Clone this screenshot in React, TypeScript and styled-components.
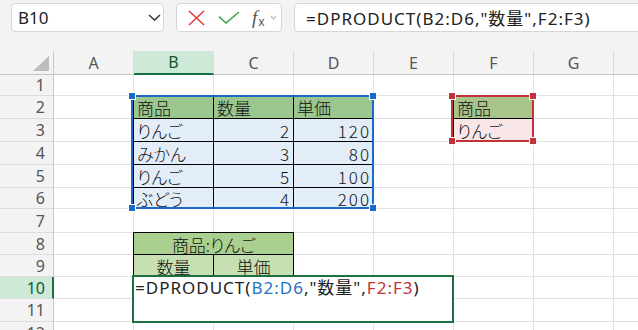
import React from 'react'
import styled, { createGlobalStyle } from 'styled-components'

const GlobalStyle = createGlobalStyle`
  html, body {
    margin: 0;
    padding: 0;
    background: #f3f3f3;
  }
  * {
    box-sizing: border-box;
  }
  body {
    font-family: 'Noto Sans', 'Noto Sans CJK JP', sans-serif;
  }
`

const COLS = ['A', 'B', 'C', 'D', 'E', 'F', 'G', 'H']
const ROW_HEIGHTS = [21, 23, 23, 23, 23, 21, 24, 22, 22, 22, 23, 22]

const SELECT_GREEN = '#1d6f42'
const BLUE = '#1b6ac9'
const RED = '#c3313a'

const Window = styled.div`
  width: 638px;
  height: 330px;
  overflow: hidden;
  display: flex;
  flex-direction: column;
  background: #f3f3f3;
`

const Toolbar = styled.div`
  height: 51px;
  flex: none;
  display: flex;
  align-items: flex-start;
  gap: 12px;
  padding: 3px 0 0 11px;
`

const Field = styled.div<{ $w?: number }>`
  height: 29px;
  background: #fff;
  border: 1px solid #d6d6d6;
  border-radius: 4px;
  display: flex;
  align-items: center;
  ${(p) => (p.$w ? `width: ${p.$w}px; flex: none;` : 'flex: 1; margin-right: -20px;')}
`

const NameBox = styled(Field)`
  justify-content: space-between;
  padding: 0 2px 0 6px;
  font-size: 17px;
  color: #222;
`

const FxBox = styled(Field)`
  padding-left: 11px;
`

const IconSlot = styled.span<{ $gap?: number }>`
  display: flex;
  align-items: center;
  margin-left: ${(p) => p.$gap ?? 0}px;
`

const FxLabel = styled.span`
  display: flex;
  align-items: flex-end;
  color: #555;
  line-height: 1;
  margin-left: 12px;
`

const FxF = styled.span`
  font-family: 'Liberation Serif', serif;
  font-style: italic;
  font-size: 19px;
`

const FxX = styled.span`
  font-family: 'Noto Sans', sans-serif;
  font-size: 12px;
  margin-left: 1px;
  margin-bottom: -1px;
`

const FormulaBar = styled(Field)`
  padding-left: 11px;
  white-space: nowrap;
`

const FormulaText = styled.span`
  font-family: 'Noto Sans', 'Noto Sans CJK JP', sans-serif;
  font-size: 17px;
  letter-spacing: 1px;
  color: #222;
`

const Ref = styled.span<{ $color: string }>`
  color: ${(p) => p.$color};
`

const Sheet = styled.div`
  display: grid;
  grid-template-columns: 54px repeat(8, 80px);
  grid-template-rows: 24px ${ROW_HEIGHTS.map((h) => `${h}px`).join(' ')};
  width: max-content;
  flex: none;
`

type Pos = { $row: number; $col: number }

const Corner = styled.div`
  grid-row: 1;
  grid-column: 1;
  background: #f3f3f3;
  border-right: 1px solid #c8c8c8;
  border-bottom: 1px solid #c4c4c4;
  display: flex;
  align-items: flex-end;
  justify-content: flex-end;
  padding: 0 4px 3px 0;
`

const ColHeader = styled.div<Pos & { $active?: boolean }>`
  grid-row: ${(p) => p.$row};
  grid-column: ${(p) => p.$col};
  background: ${(p) => (p.$active ? '#cde9d8' : '#f3f3f3')};
  border-right: 1px solid #dcdcdc;
  border-bottom: ${(p) => (p.$active ? `2px solid ${SELECT_GREEN}` : '1px solid #c4c4c4')};
  display: flex;
  align-items: center;
  justify-content: center;
  font-size: 16px;
  color: ${(p) => (p.$active ? '#0f5a30' : '#555')};
`

const RowHeader = styled.div<Pos & { $active?: boolean }>`
  grid-row: ${(p) => p.$row};
  grid-column: ${(p) => p.$col};
  background: ${(p) => (p.$active ? '#cde9d8' : '#f3f3f3')};
  border-right: ${(p) => (p.$active ? `2px solid ${SELECT_GREEN}` : '1px solid #c8c8c8')};
  border-bottom: 1px solid #dcdcdc;
  display: flex;
  align-items: center;
  justify-content: flex-end;
  padding-right: ${(p) => (p.$active ? 7 : 8)}px;
  font-size: 16px;
  color: ${(p) => (p.$active ? '#0f5a30' : '#555')};
`

const GridCell = styled.div<Pos>`
  grid-row: ${(p) => p.$row};
  grid-column: ${(p) => p.$col};
  background: #fff;
  border-right: 1px solid #e1e1e1;
  border-bottom: 1px solid #e1e1e1;
`

const TableCell = styled.div<Pos & { $span?: number; $bg: string; $align?: string; $num?: boolean }>`
  grid-row: ${(p) => p.$row};
  grid-column: ${(p) => p.$col} / span ${(p) => p.$span ?? 1};
  margin: -1px 0 0 -1px;
  border: 1px solid #000;
  background: ${(p) => p.$bg};
  display: flex;
  align-items: center;
  justify-content: ${(p) => p.$align ?? 'flex-start'};
  padding: 1px ${(p) => (p.$num ? 2 : 3)}px 0 3px;
  font-family: 'Noto Sans CJK JP', sans-serif;
  font-feature-settings: 'palt';
  font-size: 17px;
  font-weight: 300;
  letter-spacing: ${(p) => (p.$num ? 2 : 0)}px;
  line-height: 1;
  color: #111;
  white-space: nowrap;
  overflow: hidden;
`

const Frame = styled.div<{ $rows: string; $cols: string; $color: string }>`
  grid-row: ${(p) => p.$rows};
  grid-column: ${(p) => p.$cols};
  margin: -1px 0 0 -3px;
  border: 2px solid ${(p) => p.$color};
  position: relative;
  pointer-events: none;
`

const Handle = styled.span<{ $color: string; $x: 'left' | 'right'; $y: 'top' | 'bottom' }>`
  position: absolute;
  ${(p) => p.$x}: -5px;
  ${(p) => p.$y}: -5px;
  width: 8px;
  height: 8px;
  background: ${(p) => p.$color};
  border: 1px solid #fff;
`

const EditCell = styled.div`
  grid-row: 11 / span 2;
  grid-column: 3 / span 4;
  margin: -2px 0 -1px -2px;
  border: 2px solid ${SELECT_GREEN};
  background: #fff;
  padding: 0 0 0 1px;
  white-space: nowrap;
  line-height: 22px;
`

const CornerMark = () => (
  <svg width="16" height="15" viewBox="0 0 16 15">
    <polygon points="16,0 16,15 0,15" fill="#bdbdbd" />
  </svg>
)

const Chevron = ({ w = 13, h = 7, color = '#333', sw = 1.5 }) => (
  <svg width={w} height={h} viewBox={`0 0 ${w} ${h}`}>
    <polyline points={`1,1 ${w / 2},${h - 1} ${w - 1},1`} fill="none" stroke={color} strokeWidth={sw} />
  </svg>
)

const CancelIcon = () => (
  <svg width="17" height="16" viewBox="0 0 17 16">
    <path d="M1 1 L16 15 M16 1 L1 15" stroke="#e5383d" strokeWidth="1.6" fill="none" />
  </svg>
)

const EnterIcon = () => (
  <svg width="22" height="13" viewBox="0 0 22 13">
    <polyline points="1,5.5 8,12 21,1" stroke="#3ea34e" strokeWidth="1.6" fill="none" />
  </svg>
)

const FormulaContent = ({ colored }: { colored?: boolean }) => (
  <FormulaText>
    =DPRODUCT(
    <Ref $color={colored ? '#1f74c6' : 'inherit'}>B2:D6</Ref>
    ,"数量",
    <Ref $color={colored ? RED : 'inherit'}>F2:F3</Ref>)
  </FormulaText>
)

const dataRows: [string, string, string][] = [
  ['りんご', '2', '120'],
  ['みかん', '3', '80'],
  ['りんご', '5', '100'],
  ['ぶどう', '4', '200'],
]

const HEAD_GREEN = '#9bc78f'
const BODY_BLUE = '#e3edf8'

export default function App() {
  return (
    <Window>
      <GlobalStyle />
      <Toolbar>
        <NameBox $w={153}>
          B10
          <Chevron />
        </NameBox>
        <FxBox $w={106}>
          <CancelIcon />
          <IconSlot $gap={13}>
            <EnterIcon />
          </IconSlot>
          <FxLabel>
            <FxF>f</FxF>
            <FxX>x</FxX>
          </FxLabel>
          <IconSlot $gap={5}>
            <Chevron w={7} h={5} color="#bbb" sw={1.2} />
          </IconSlot>
        </FxBox>
        <FormulaBar>
          <FormulaContent />
        </FormulaBar>
      </Toolbar>

      <Sheet>
        <Corner>
          <CornerMark />
        </Corner>
        {COLS.map((c, i) => (
          <ColHeader key={c} $row={1} $col={i + 2} $active={c === 'B'}>
            {c}
          </ColHeader>
        ))}
        {ROW_HEIGHTS.map((_, r) => (
          <React.Fragment key={r}>
            <RowHeader $row={r + 2} $col={1} $active={r + 1 === 10}>
              {r + 1}
            </RowHeader>
            {COLS.map((c, i) => (
              <GridCell key={c} $row={r + 2} $col={i + 2} />
            ))}
          </React.Fragment>
        ))}

        {/* data table B2:D6 */}
        {['商品', '数量', '単価'].map((h, i) => (
          <TableCell key={h} $row={3} $col={i + 3} $bg={HEAD_GREEN}>
            {h}
          </TableCell>
        ))}
        {dataRows.map((row, r) =>
          row.map((v, i) => (
            <TableCell
              key={`${r}-${i}`}
              $row={r + 4}
              $col={i + 3}
              $bg={BODY_BLUE}
              $num={i > 0}
              $align={i > 0 ? 'flex-end' : 'flex-start'}
            >
              {v}
            </TableCell>
          )),
        )}

        {/* criteria F2:F3 */}
        <TableCell $row={3} $col={7} $bg="#a9c48b">
          商品
        </TableCell>
        <TableCell $row={4} $col={7} $bg="#f9e6e6">
          りんご
        </TableCell>

        {/* result header B8:C9 */}
        <TableCell $row={9} $col={3} $span={2} $bg="#a9d08e" $align="center">
          商品:りんご
        </TableCell>
        <TableCell $row={10} $col={3} $bg="#c6e0b4" $align="center">
          数量
        </TableCell>
        <TableCell $row={10} $col={4} $bg="#c6e0b4" $align="center">
          単価
        </TableCell>

        <Frame $rows="3 / span 5" $cols="3 / span 3" $color={BLUE}>
          <Handle $color={BLUE} $x="left" $y="top" />
          <Handle $color={BLUE} $x="right" $y="top" />
          <Handle $color={BLUE} $x="left" $y="bottom" />
          <Handle $color={BLUE} $x="right" $y="bottom" />
        </Frame>
        <Frame $rows="3 / span 2" $cols="7 / span 1" $color={RED}>
          <Handle $color={RED} $x="left" $y="top" />
          <Handle $color={RED} $x="right" $y="top" />
          <Handle $color={RED} $x="left" $y="bottom" />
          <Handle $color={RED} $x="right" $y="bottom" />
        </Frame>

        <EditCell>
          <FormulaContent colored />
        </EditCell>
      </Sheet>
    </Window>
  )
}
